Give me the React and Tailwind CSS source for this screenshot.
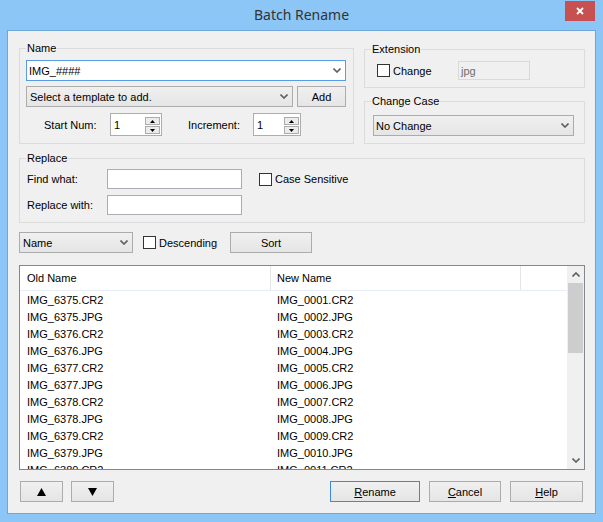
import React from 'react';

const oldNames = [
  'IMG_6375.CR2', 'IMG_6375.JPG', 'IMG_6376.CR2', 'IMG_6376.JPG', 'IMG_6377.CR2', 'IMG_6377.JPG',
  'IMG_6378.CR2', 'IMG_6378.JPG', 'IMG_6379.CR2', 'IMG_6379.JPG', 'IMG_6380.CR2',
];
const newNames = [
  'IMG_0001.CR2', 'IMG_0002.JPG', 'IMG_0003.CR2', 'IMG_0004.JPG', 'IMG_0005.CR2', 'IMG_0006.JPG',
  'IMG_0007.CR2', 'IMG_0008.JPG', 'IMG_0009.CR2', 'IMG_0010.JPG', 'IMG_0011.CR2',
];

function Chevron({ up = false }) {
  return (
    <svg width="8" height="5" viewBox="0 0 8 5">
      <path d={up ? 'M0.5 4.5 L4 1 L7.5 4.5' : 'M0.5 0.5 L4 4 L7.5 0.5'} fill="none" stroke="#606060" strokeWidth="1.6" />
    </svg>
  );
}

function Combo({ text, editable = false, className = '' }) {
  return (
    <div
      className={`flex items-center h-[21px] border pl-[2px] pr-[4px] ${
        editable ? 'border-[#569de5] bg-white' : 'border-[#acacac] bg-linear-to-b from-[#f0f0f0] to-[#e5e5e5]'
      } ${className}`}
    >
      <span className="flex-1 truncate">{text}</span>
      <Chevron />
    </div>
  );
}

function Btn({ children, primary = false, className = '' }) {
  return (
    <div
      className={`flex items-center justify-center h-[21px] border bg-linear-to-b from-[#f0f0f0] to-[#e5e5e5] ${
        primary ? 'border-[#3c8ae0]' : 'border-[#acacac]'
      } ${className}`}
    >
      {children}
    </div>
  );
}

function TextBox({ className = '' }) {
  return <div className={`h-[20px] border border-[#abadb3] bg-white ${className}`}></div>;
}

function Check() {
  return <div className="w-[13px] h-[13px] border border-[#333333] bg-white shrink-0"></div>;
}

function Tri({ up }) {
  return (
    <svg width="5" height="3" viewBox="0 0 5 3">
      <polygon points={up ? '0,3 2.5,0 5,3' : '0,0 2.5,3 5,0'} fill="#000" />
    </svg>
  );
}

function Spin({ value, width }) {
  return (
    <div className={`flex h-[23px] border border-[#abadb3] bg-white ${width}`}>
      <span className="flex-1 flex items-center pl-[3px]">{value}</span>
      <div className="flex flex-col gap-[1px] pt-[3px] pb-[1px] pr-[1px] w-[16px]">
        <div className="h-[8px] border border-[#acacac] bg-[#ececec] flex items-center justify-center"><Tri up /></div>
        <div className="h-[8px] border border-[#acacac] bg-[#ececec] flex items-center justify-center"><Tri /></div>
      </div>
    </div>
  );
}

export default function App() {
  return (
    <div className="w-[603px] h-[522px] bg-[#8cc6f6] flex flex-col text-[11px] leading-[14px] text-black font-['Liberation_Sans',Arial,sans-serif]">
      {/* Title bar */}
      <div className="relative h-[30px] flex items-center justify-center">
        <span className="font-['Noto_Sans',sans-serif] text-[14px] text-[#333333]">Batch Rename</span>
        <div className="absolute right-[8px] top-[1px] w-[30px] h-[20px] bg-[#c75050] flex items-center justify-center">
          <svg width="8" height="8" viewBox="0 0 8 8">
            <path d="M1 1 L7 7 M7 1 L1 7" stroke="#fff" strokeWidth="1.8" />
          </svg>
        </div>
      </div>

      {/* Client area */}
      <div className="ml-[7px] w-[589px] h-[484px] border border-[#6fa6d9] bg-[#f0f0f0] pl-[11px] pr-[10px] pt-[10px] flex flex-col">
        <div className="flex gap-[10px]">
          {/* Name */}
          <fieldset className="w-[335px] border border-[#dcdcdc] pl-[6px] pr-[7px] pt-[5px] pb-[7px]">
            <legend className="px-[1px]">Name</legend>
            <Combo text="IMG_####" editable />
            <div className="flex gap-[4px] mt-[5px]">
              <Combo text="Select a template to add." className="w-[267px] pl-[3px]" />
              <Btn className="w-[49px]">Add</Btn>
            </div>
            <div className="flex items-center mt-[6px] pl-[18px]">
              <span className="w-[66px]">Start Num:</span>
              <Spin value="1" width="w-[52px]" />
              <span className="w-[65px] ml-[26px]">Increment:</span>
              <Spin value="1" width="w-[48px]" />
            </div>
          </fieldset>

          <div className="w-[221px] flex flex-col">
            {/* Extension */}
            <fieldset className="mt-[1px] border border-[#dcdcdc] pl-[6px] pt-[5px] pb-[7px]">
              <legend className="px-[1px]">Extension</legend>
              <div className="flex items-center h-[19px]">
                <div className="flex items-center w-[87px] pl-[6px]">
                  <Check />
                  <span className="ml-[3px]">Change</span>
                </div>
                <div className="w-[72px] h-[19px] border border-[#d9d9d9] bg-[#f0f0f0] text-[#6d6d6d] flex items-center pl-[2px]">jpg</div>
              </div>
            </fieldset>

            {/* Change Case */}
            <fieldset className="mt-[6px] border border-[#dcdcdc] pl-[6px] pt-[7px] pb-[7px]">
              <legend className="px-[1px]">Change Case</legend>
              <Combo text="No Change" className="ml-[2px] w-[201px]" />
            </fieldset>
          </div>
        </div>

        {/* Replace */}
        <fieldset className="mt-[7px] border border-[#dcdcdc] pl-[6px] pt-[4px] pb-[7px]">
          <legend className="px-[1px]">Replace</legend>
          <div className="flex items-center h-[20px] pl-[1px]">
            <span className="w-[80px]">Find what:</span>
            <TextBox className="w-[135px]" />
            <div className="ml-[17px]"><Check /></div>
            <span className="ml-[3px]">Case Sensitive</span>
          </div>
          <div className="flex items-center h-[20px] mt-[6px] pl-[1px]">
            <span className="w-[80px]">Replace with:</span>
            <TextBox className="w-[135px]" />
          </div>
        </fieldset>

        {/* Sort row */}
        <div className="flex items-center h-[21px] mt-[9px]">
          <Combo text="Name" className="w-[114px] pl-[3px]" />
          <div className="flex items-center w-[97px] pl-[10px]">
            <Check />
            <span className="ml-[3px]">Descending</span>
          </div>
          <Btn className="w-[82px]">Sort</Btn>
        </div>

        {/* List */}
        <div className="mt-[12px] h-[205px] border border-[#828790] bg-white flex">
          <div className="flex-1 flex flex-col overflow-hidden">
            <div className="flex h-[25px] border-b border-[#e5eef9] shrink-0">
              <div className="w-[251px] border-r border-[#e5e5e5] pl-[7px] flex items-center">Old Name</div>
              <div className="w-[250px] border-r border-[#e5e5e5] pl-[6px] flex items-center">New Name</div>
            </div>
            {oldNames.map((name, i) => (
              <div key={name} className="flex h-[17px] shrink-0 items-center">
                <div className="w-[251px] pl-[7px]">{name}</div>
                <div className="w-[250px] pl-[6px]">{newNames[i]}</div>
              </div>
            ))}
          </div>
          <div className="w-[17px] bg-[#f0f0f0] flex flex-col">
            <div className="h-[17px] flex items-center justify-center"><Chevron up /></div>
            <div className="h-[70px] mx-[1px] bg-[#cdcdcd]"></div>
            <div className="flex-1"></div>
            <div className="h-[17px] flex items-center justify-center"><Chevron /></div>
          </div>
        </div>

        {/* Bottom buttons */}
        <div className="flex h-[21px] mt-[11px]">
          <Btn className="w-[43px] ml-[1px]">
            <svg width="9" height="8" viewBox="0 0 9 8"><polygon points="0,8 4.5,0 9,8" fill="#000" /></svg>
          </Btn>
          <Btn className="w-[43px] ml-[8px]">
            <svg width="9" height="8" viewBox="0 0 9 8"><polygon points="0,0 4.5,8 9,0" fill="#000" /></svg>
          </Btn>
          <Btn primary className="w-[90px] ml-auto"><span><u>R</u>ename</span></Btn>
          <Btn className="w-[72px] ml-[9px]"><span><u>C</u>ancel</span></Btn>
          <Btn className="w-[73px] ml-[9px] mr-[2px]"><span><u>H</u>elp</span></Btn>
        </div>
      </div>
    </div>
  );
}
